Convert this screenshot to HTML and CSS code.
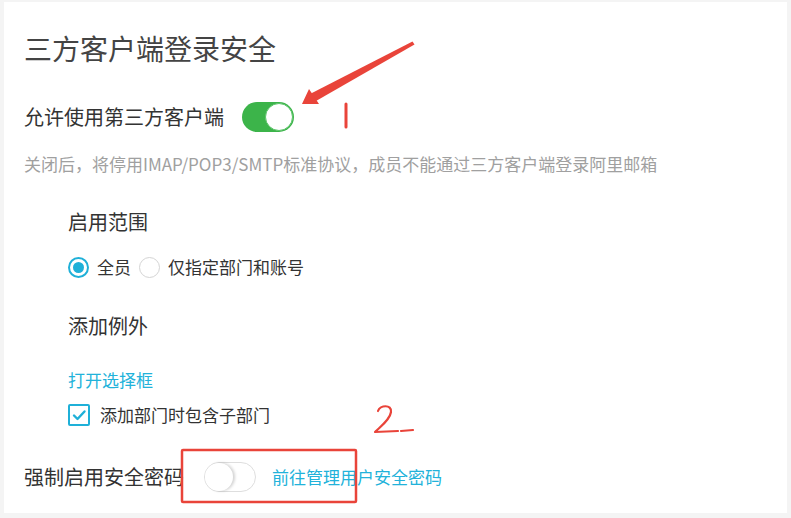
FILE: index.html
```html
<!DOCTYPE html>
<html lang="zh-CN">
<head>
<meta charset="utf-8">
<title>三方客户端登录安全</title>
<link rel="stylesheet" href="styles.css">
</head>
<body>
<div class="card">
  <h1 class="title">三方客户端登录安全</h1>

  <div class="row row-main">
    <span class="label">允许使用第三方客户端</span>
    <span class="switch switch-on"><span class="knob"></span></span>
  </div>

  <p class="desc">关闭后，将停用IMAP/POP3/SMTP标准协议，成员不能通过三方客户端登录阿里邮箱</p>

  <div class="sub">
    <div class="sub-label scope-label">启用范围</div>
    <div class="radios">
      <span class="radio radio-on"><span class="dot"></span></span>
      <span class="opt">全员</span>
      <span class="radio"></span>
      <span class="opt">仅指定部门和账号</span>
    </div>

    <div class="sub-label except-label">添加例外</div>
    <a class="link open-link">打开选择框</a>
    <div class="check-row">
      <span class="checkbox">
        <svg width="16" height="16" viewBox="0 0 16 16"><path d="M3 8.5 L6.5 12 L13.5 4.5" fill="none" stroke="#1fb0d8" stroke-width="2.4" stroke-linecap="round" stroke-linejoin="round"/></svg>
      </span>
      <span class="opt">添加部门时包含子部门</span>
    </div>
  </div>

  <div class="row row-last">
    <span class="label">强制启用安全密码</span>
    <span class="switch switch-off"><span class="knob"></span></span>
    <a class="link manage-link">前往管理用户安全密码</a>
  </div>
</div>

<svg class="annot" width="791" height="518" viewBox="0 0 791 518">
  <polygon points="412.5,41.5 414.5,44.5 316,101 310,94" fill="#e9443a"/>
  <polygon points="302,104 309,89 319,104" fill="#e9443a"/>
  <line x1="346" y1="104" x2="346" y2="127" stroke="#e9443a" stroke-width="3" stroke-linecap="round"/>
  <path d="M378,411 C380,405 392,404 391,412 C390,420 380,427 375,432 L398,431 M401,431 L413,430" fill="none" stroke="#e9443a" stroke-width="2.2" stroke-linecap="round" stroke-linejoin="round"/>
  <rect x="182" y="450" width="174" height="52" rx="1" fill="none" stroke="#e9443a" stroke-width="2.5"/>
</svg>
</body>
</html>
```
FILE: styles.css
```css
* { box-sizing: border-box; }
html, body { margin: 0; padding: 0; }
body {
  background: #f4f4f4;
  padding: 2px 4px 5px 4px;
  width: 791px;
  height: 518px;
  font-family: "Noto Sans CJK SC", "Noto Sans", sans-serif;
  color: #333;
  position: relative;
  overflow: hidden;
}
.card {
  background: #fff;
  height: 511px;
  padding: 26px 0 0 20px;
  display: flex;
  flex-direction: column;
  align-items: flex-start;
}
.title {
  margin: 0;
  height: 40px;
  line-height: 40px;
  font-size: 28px;
  font-weight: 400;
  color: #444;
}
.row {
  display: flex;
  align-items: center;
  height: 32px;
}
.row-main { margin-top: 33px; }
.label {
  font-size: 20px;
  line-height: 32px;
  color: #333;
}
.switch {
  position: relative;
  width: 52px;
  height: 30px;
  border-radius: 15px;
  display: inline-block;
}
.switch-on {
  background: #3cb44a;
  margin-left: 18px;
}
.switch-on .knob {
  position: absolute;
  right: 1px;
  top: 1px;
  width: 28px;
  height: 28px;
  border-radius: 50%;
  background: #fff;
  border: 1.5px solid #5cc46a;
}
.switch-off {
  background: #fff;
  border: 1px solid #dedede;
  margin-left: 20px;
}
.switch-off .knob {
  position: absolute;
  left: 0;
  top: 0;
  width: 28px;
  height: 28px;
  border-radius: 50%;
  background: #fff;
  box-shadow: 2px 0 3px rgba(0,0,0,0.18);
}
.desc {
  margin: 19px 0 0 0;
  height: 24px;
  line-height: 24px;
  font-size: 17px;
  color: #a0a0a0;
}
.sub {
  padding-left: 44px;
  display: flex;
  flex-direction: column;
  align-items: flex-start;
}
.sub-label {
  height: 28px;
  line-height: 28px;
  font-size: 20px;
  color: #333;
}
.scope-label { margin-top: 32px; }
.radios {
  margin-top: 19px;
  height: 24px;
  display: flex;
  align-items: center;
}
.radio {
  width: 21px;
  height: 21px;
  border-radius: 50%;
  border: 1.5px solid #d4d4d4;
  background: #fff;
  display: flex;
  align-items: center;
  justify-content: center;
  margin-right: 8px;
}
.radio-on { border: 2px solid #1fb0d8; }
.radio-on .dot {
  width: 11px;
  height: 11px;
  border-radius: 50%;
  background: #1fb0d8;
}
.opt {
  font-size: 17px;
  line-height: 24px;
  color: #333;
  margin-right: 8px;
}
.except-label { margin-top: 33px; }
.link {
  font-size: 17px;
  line-height: 24px;
  color: #22b2da;
  text-decoration: none;
}
.open-link { margin-top: 28px; height: 24px; }
.check-row {
  margin-top: 11px;
  height: 24px;
  display: flex;
  align-items: center;
}
.checkbox {
  width: 22px;
  height: 22px;
  border: 2px solid #1fb0d8;
  border-radius: 2px;
  display: flex;
  align-items: center;
  justify-content: center;
  margin-right: 10px;
}
.row-last { margin-top: 34px; }
.manage-link { margin-left: 16px; }
.annot {
  position: absolute;
  left: 0;
  top: 0;
  pointer-events: none;
}
```
